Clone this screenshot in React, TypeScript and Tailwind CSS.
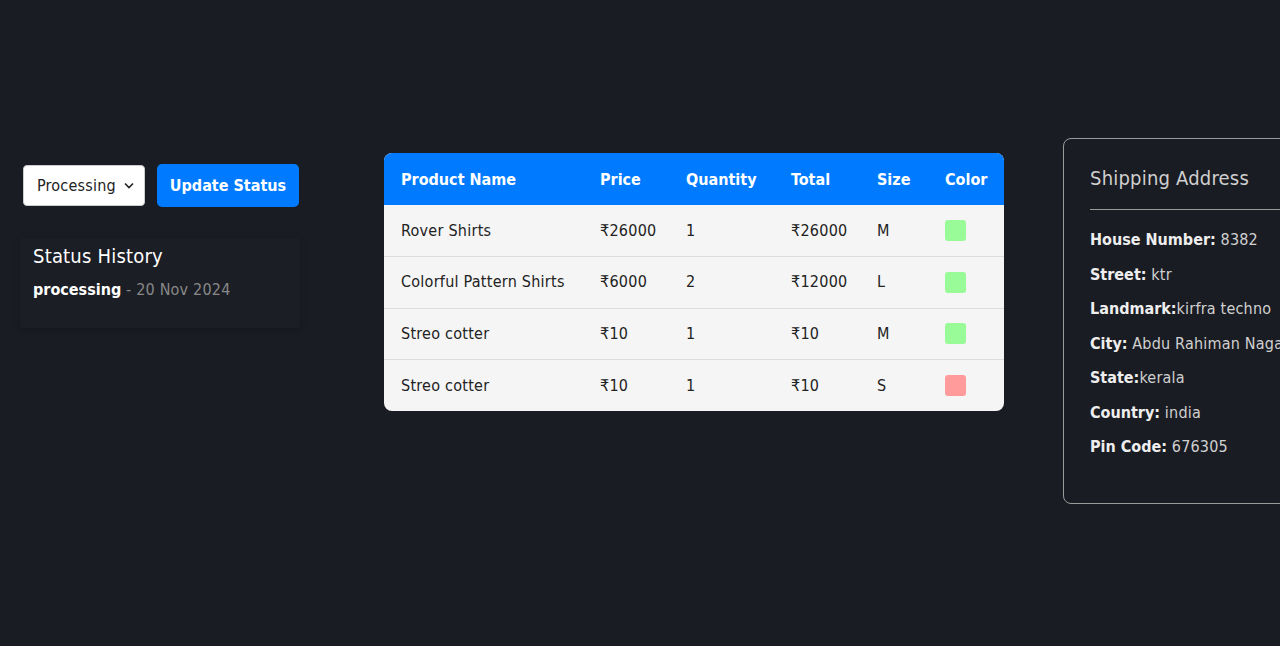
import React from "react";

const rows = [
  { name: "Rover Shirts", price: "₹26000", qty: "1", total: "₹26000", size: "M", color: "bg-[#98fb98]" },
  { name: "Colorful Pattern Shirts", price: "₹6000", qty: "2", total: "₹12000", size: "L", color: "bg-[#98fb98]" },
  { name: "Streo cotter", price: "₹10", qty: "1", total: "₹10", size: "M", color: "bg-[#98fb98]" },
  { name: "Streo cotter", price: "₹10", qty: "1", total: "₹10", size: "S", color: "bg-[#ff9b9b]" },
];

const addr: [string, string, boolean][] = [
  ["House Number:", "8382", true],
  ["Street:", "ktr", true],
  ["Landmark:", "kirfra techno", false],
  ["City:", "Abdu Rahiman Nagar", true],
  ["State:", "kerala", false],
  ["Country:", "india", true],
  ["Pin Code:", "676305", true],
];

export default function App() {
  return (
    <div
      className="w-screen h-[646px] overflow-hidden bg-[#1a1c23] text-white"
      style={{ fontFamily: '"DejaVu Sans Condensed", "DejaVu Sans", sans-serif' }}
    >
      <div className="flex items-start w-[1400px]">
        {/* Left */}
        <div className="ml-[20px] mt-[164px] w-[280px] shrink-0">
          <div className="flex items-center gap-[12px] pl-[3px]">
            <div className="flex items-center justify-between w-[122px] h-[41px] bg-white rounded-[4px] border border-[#ccc] px-[13px] text-[#222] text-[16px] tracking-[0.2px]">
              <span>Processing</span>
              <svg width="10" height="7" viewBox="0 0 10 7" className="mr-[-3px]">
                <path d="M1 1.5 L5 5.5 L9 1.5" stroke="#222" strokeWidth="1.6" fill="none" />
              </svg>
            </div>
            <button className="h-[43px] w-[142px] bg-[#007bff] rounded-[5px] text-white text-[16px] font-bold">
              Update Status
            </button>
          </div>
          <div className="mt-[31px] w-[280px] h-[90px] bg-[#1c1e25] shadow-[0_1px_6px_rgba(0,0,0,0.2)] rounded-[4px] px-[13px] pt-[3px]">
            <div className="text-[20px] text-white leading-[30px] tracking-[0.2px]">Status History</div>
            <div className="mt-[7px] text-[16px] leading-[24px]">
              <span className="font-bold text-white">processing</span>
              <span className="text-[#888] tracking-[0.2px]"> - 20 Nov 2024</span>
            </div>
          </div>
        </div>

        {/* Table */}
        <div className="ml-[84px] mt-[153px] w-[620px] shrink-0 rounded-[8px] overflow-hidden bg-[#f5f5f5]">
          <table className="w-full table-fixed text-[16px] border-collapse">
            <thead>
              <tr className="bg-[#007bff] text-white h-[52px]">
                <th className="text-left font-bold pl-[17px] w-[216px] pt-[1px]">Product Name</th>
                <th className="text-left font-bold w-[86px] pt-[1px]">Price</th>
                <th className="text-left font-bold w-[105px] pt-[1px]">Quantity</th>
                <th className="text-left font-bold w-[86px] pt-[1px]">Total</th>
                <th className="text-left font-bold w-[68px] pt-[1px]">Size</th>
                <th className="text-left font-bold pt-[1px]">Color</th>
              </tr>
            </thead>
            <tbody className="text-[#222] tracking-[0.25px]">
              {rows.map((r, i) => (
                <tr key={i} className={`h-[51.5px] ${i > 0 ? "border-t border-[#dcdcdc]" : ""}`}>
                  <td className="pl-[17px] whitespace-nowrap">{r.name}</td>
                  <td>{r.price}</td>
                  <td>{r.qty}</td>
                  <td>{r.total}</td>
                  <td>{r.size}</td>
                  <td>
                    <div className={`w-[21px] h-[21px] rounded-[3px] ${r.color}`} />
                  </td>
                </tr>
              ))}
            </tbody>
          </table>
        </div>

        {/* Shipping */}
        <div className="ml-[59px] mt-[138px] w-[300px] h-[366px] border border-[#9a9a9a] rounded-[8px] px-[26px] pt-[24px] shrink-0">
          <div className="text-[20px] text-[#cfcfcf] leading-[30px] tracking-[0.2px]">Shipping Address</div>
          <div className="mt-[16px] border-t border-[#9a9a9a]" />
          <div className="mt-[18px] flex flex-col gap-[10.5px] text-[16px] text-[#d0d0d0]">
            {addr.map(([k, v, sp]) => (
              <div key={k} className="leading-[24px] whitespace-nowrap">
                <span className="font-bold text-[#eee]">{k}</span>
                <span className="tracking-[0.2px]">
                  {sp ? " " : ""}
                  {v}
                </span>
              </div>
            ))}
          </div>
        </div>
      </div>
    </div>
  );
}
